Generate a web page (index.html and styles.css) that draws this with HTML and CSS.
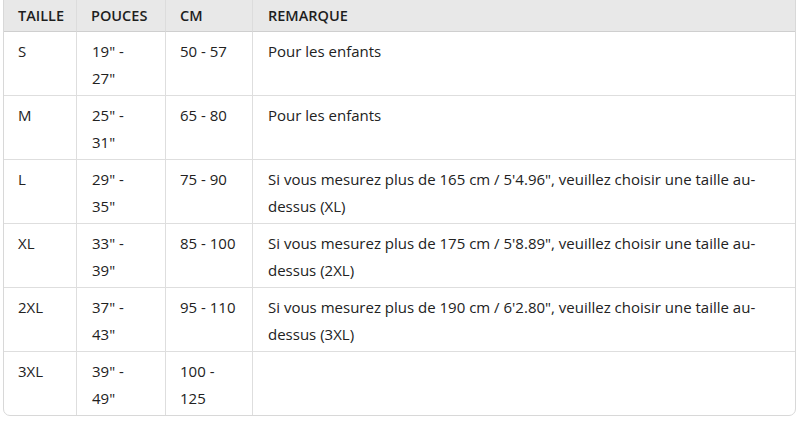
FILE: index.html
```html
<!DOCTYPE html>
<html lang="fr">
<head>
<meta charset="utf-8">
<title>Tableau des tailles</title>
<link rel="stylesheet" href="styles.css">
</head>
<body>
<div class="wrap">
<table class="sizes">
<colgroup>
<col class="c1"><col class="c2"><col class="c3"><col class="c4">
</colgroup>
<thead>
<tr><th>TAILLE</th><th>POUCES</th><th>CM</th><th>REMARQUE</th></tr>
</thead>
<tbody>
<tr><td>S</td><td>19" - 27"</td><td>50 - 57</td><td>Pour les enfants</td></tr>
<tr><td>M</td><td>25" - 31"</td><td>65 - 80</td><td>Pour les enfants</td></tr>
<tr><td>L</td><td>29" - 35"</td><td>75 - 90</td><td>Si vous mesurez plus de 165 cm / 5'4.96", veuillez choisir une taille au-dessus (XL)</td></tr>
<tr><td>XL</td><td>33" - 39"</td><td>85 - 100</td><td>Si vous mesurez plus de 175 cm / 5'8.89", veuillez choisir une taille au-dessus (2XL)</td></tr>
<tr><td>2XL</td><td>37" - 43"</td><td>95 - 110</td><td>Si vous mesurez plus de 190 cm / 6'2.80", veuillez choisir une taille au-dessus (3XL)</td></tr>
<tr><td>3XL</td><td>39" - 49"</td><td>100 - 125</td><td></td></tr>
</tbody>
</table>
</div>
</body>
</html>
```

FILE: styles.css
```css
html, body {
  margin: 0;
  padding: 0;
  background: #ffffff;
}
.wrap {
  padding: 0 4px 0 3px;
  margin-top: -1px;
}
.sizes {
  width: 793px;
  table-layout: fixed;
  border-collapse: separate;
  border-spacing: 0;
  border: 1px solid #d8d8d8;
  border-radius: 0 0 7px 7px;
  font-family: "Open Sans", "Noto Sans", sans-serif;
  font-size: 15px;
  color: #222222;
}
.c1 { width: 73px; }
.c2 { width: 89px; }
.c3 { width: 87px; }
.c4 { width: auto; }
.sizes th {
  background: #e8e8e8;
  font-size: 14.5px;
  font-weight: 600;
  text-align: left;
  height: 31px;
  padding: 0 14px;
  border-bottom: 1px solid #cfcfcf;
  border-right: 1px solid #dcdcdc;
  line-height: 20px;
  color: #1e1e1e;
}
.sizes td {
  vertical-align: top;
  padding: 6px 15px 3px 14px;
  line-height: 27px;
  height: 54px;
  border-right: 1px solid #dedede;
  border-bottom: 1px solid #dedede;
}
.sizes td:nth-child(2) { padding-left: 15px; }
.sizes td:nth-child(4), .sizes th:nth-child(4) { padding-left: 15px; }
.sizes th:last-child, .sizes td:last-child { border-right: none; }
.sizes tbody tr:last-child td { border-bottom: none; }
```
